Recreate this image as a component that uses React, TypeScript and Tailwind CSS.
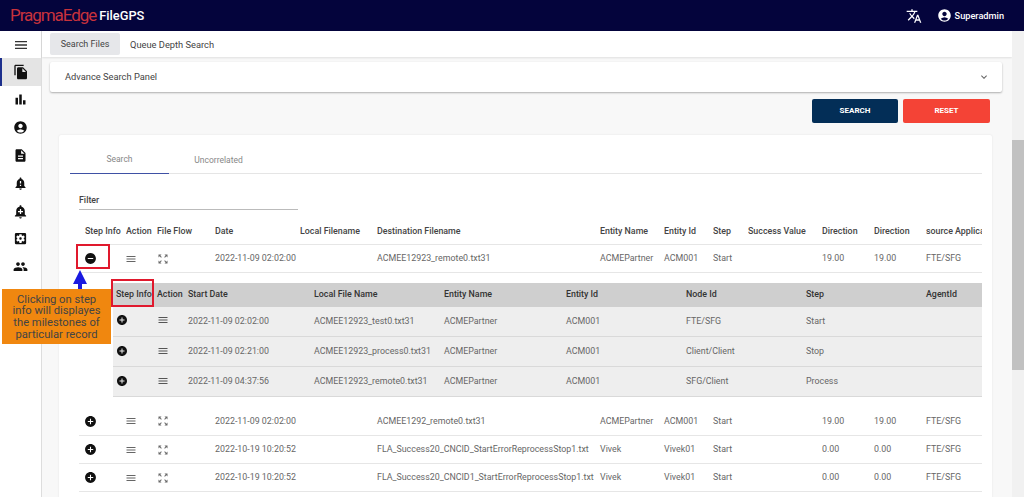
import { MdMenu, MdFileCopy, MdBarChart, MdAccountCircle, MdDescription, MdNotificationImportant, MdAddAlert, MdSettingsApplications, MdPeople, MdTranslate, MdAddCircle, MdRemoveCircle, MdZoomOutMap, MdExpandMore } from 'react-icons/md';

const mainCols = ['w-[47px]', 'w-[31px]', 'w-[58px]', 'w-[85px]', 'w-[77px]', 'w-[223px]', 'w-[64px]', 'w-[49px]', 'w-[35px]', 'w-[74px]', 'w-[52px]', 'w-[52px]', 'w-[56px]'];
const mainHead = ['Step Info', 'Action', 'File Flow', 'Date', 'Local Filename', 'Destination Filename', 'Entity Name', 'Entity Id', 'Step', 'Success Value', 'Direction', 'Direction', 'source Application'];

const subCols = ['w-[44px]', 'w-[31px]', 'w-[126px]', 'w-[130px]', 'w-[122px]', 'w-[120px]', 'w-[120px]', 'w-[120px]', 'w-[56px]'];
const subHead = ['Step Info', 'Action', 'Start Date', 'Local File Name', 'Entity Name', 'Entity Id', 'Node Id', 'Step', 'AgentId'];

const subRows = [
  ['2022-11-09 02:02:00', 'ACMEE12923_test0.txt31', 'ACMEPartner', 'ACM001', 'FTE/SFG', 'Start'],
  ['2022-11-09 02:21:00', 'ACMEE12923_process0.txt31', 'ACMEPartner', 'ACM001', 'Client/Client', 'Stop'],
  ['2022-11-09 04:37:56', 'ACMEE12923_remote0.txt31', 'ACMEPartner', 'ACM001', 'SFG/Client', 'Process'],
];

const moreRows = [
  ['2022-11-09 02:02:00', 'ACMEE1292_remote0.txt31', 'ACMEPartner', 'ACM001', 'Start', '19.00', '19.00'],
  ['2022-10-19 10:20:52', 'FLA_Success20_CNCID_StartErrorReprocessStop1.txt', 'Vivek', 'Vivek01', 'Start', '0.00', '0.00'],
  ['2022-10-19 10:20:52', 'FLA_Success20_CNCID1_StartErrorReprocessStop1.txt', 'Vivek', 'Vivek01', 'Start', '0.00', '0.00'],
];

function MainRow({ row, open }: { row: string[]; open?: boolean }) {
  return (
    <tr className="h-[28px] border-b border-[#e6e6e6] text-[#666] [&>td]:pt-px">
      <td className="pl-[5px]">
        {open ? <MdRemoveCircle size={13} className="text-[#111]" /> : <MdAddCircle size={13} className="text-[#111]" />}
      </td>
      <td><MdMenu size={12} className="ml-[-1px] text-[#666]" /></td>
      <td><MdZoomOutMap size={12} className="text-[#666]" /></td>
      <td className="whitespace-nowrap">{row[0]}</td>
      <td></td>
      <td className="whitespace-nowrap">{row[1]}</td>
      <td>{row[2]}</td>
      <td>{row[3]}</td>
      <td>{row[4]}</td>
      <td></td>
      <td>{row[5]}</td>
      <td>{row[6]}</td>
      <td>FTE/SFG</td>
    </tr>
  );
}

function Columns({ cols }: { cols: string[] }) {
  return (
    <colgroup>
      {cols.map((c, i) => <col key={i} className={c} />)}
    </colgroup>
  );
}

function SubTable() {
  return (
    <table className="table-fixed w-[869px] ml-[34px] border-collapse">
      <Columns cols={subCols} />
      <thead>
        <tr className="h-[24px] bg-[#cfcfcf] text-[#333] font-medium text-left">
          {subHead.map((h, i) => (
            <th key={i} className={`font-medium whitespace-nowrap ${i === 0 ? 'pl-[3px]' : ''}`}>{h}</th>
          ))}
        </tr>
      </thead>
      <tbody>
        {subRows.map((r, i) => (
          <tr key={i} className="h-[30px] bg-[#eeeeee] border-b border-[#d9d9d9] text-[#666]">
            <td className="pl-[3px] pb-[2px]"><MdAddCircle size={12} className="text-[#111]" /></td>
            <td className="pb-[2px]"><MdMenu size={12} className="text-[#555]" /></td>
            <td>{r[0]}</td>
            <td>{r[1]}</td>
            <td>{r[2]}</td>
            <td>{r[3]}</td>
            <td>{r[4]}</td>
            <td>{r[5]}</td>
            <td></td>
          </tr>
        ))}
      </tbody>
    </table>
  );
}

export default function App() {
  const navIcons = [MdBarChart, MdAccountCircle, MdDescription, MdNotificationImportant, MdAddAlert, MdSettingsApplications, MdPeople];
  return (
    <div className="relative h-[497px] w-[1024px] overflow-hidden bg-[#f8f8f8] [font-family:Roboto,sans-serif] text-[8.85px]">
      <header className="flex h-[31px] items-center justify-between bg-[#04043c] pl-[10px] pr-[20px]">
        <div className="flex items-center">
          <span className="text-[17px] tracking-[-1.05px] text-[#c8323c]">PragmaEdge</span>
          <span className="ml-[3px] text-[12.8px] font-medium text-white">FileGPS</span>
        </div>
        <div className="flex items-center text-white">
          <MdTranslate size={16} />
          <MdAccountCircle size={15} className="ml-[15px]" />
          <span className="ml-[3px] text-[9.2px] font-medium">Superadmin</span>
        </div>
      </header>

      <div className="flex h-[466px]">
        <aside className="flex w-[42px] shrink-0 flex-col border-r border-[#ddd] bg-white">
          <div className="flex h-[27px] items-center justify-center">
            <MdMenu size={16} className="text-[#333]" />
          </div>
          <div className="flex h-[28px] items-center justify-center border-l-2 border-[#1c2f8c] bg-[#e4e4e4] pr-[2px]">
            <MdFileCopy size={16} className="text-[#111]" />
          </div>
          {navIcons.map((Icon, i) => (
            <div key={i} className="flex h-[27.8px] items-center justify-center">
              <Icon size={15} className="text-[#111]" />
            </div>
          ))}
        </aside>

        <div className="flex min-w-0 flex-1 flex-col pr-[12px]">
          <nav className="flex h-[26px] items-center gap-[10px] bg-white pl-[8px] text-[9px] text-[#444] shadow-[0_1px_2px_rgba(0,0,0,0.1)]">
            <span className="flex h-[22px] w-[70px] items-center justify-center rounded-[2px] bg-[#e6e7ea] pt-px">Search Files</span>
            <span className="pt-px text-[9.3px]">Queue Depth Search</span>
          </nav>

          <main className="min-h-0 flex-1 overflow-hidden">
            <div className="ml-[8px] mr-[10px] mt-[5px] flex h-[30px] items-center justify-between rounded-[2px] bg-white pl-[15px] pr-[12px] text-[9.3px] text-[#444] shadow-[0_1px_2px_rgba(0,0,0,0.3)]">
              <span>Advance Search Panel</span>
              <MdExpandMore size={12} className="text-[#666]" />
            </div>

            <div className="mt-[7px] flex justify-end gap-[5px] pr-[22px]">
              <button className="h-[24px] w-[86px] rounded-[2px] bg-[#032e57] text-[8px] font-bold text-white">SEARCH</button>
              <button className="h-[24px] w-[87px] rounded-[2px] bg-[#f44336] text-[8px] font-bold text-white">RESET</button>
            </div>

            <section className="ml-[17px] mr-[20px] mt-[12px] h-[400px] rounded-[2px] bg-white pl-[11px] pr-[10px] pt-[12px] shadow-[0_0_2px_rgba(0,0,0,0.1)]">
              <div className="flex h-[27px] border-b border-[#e5e5e5] text-[#888]">
                <span className="flex h-[27px] w-[99px] items-center justify-center border-b border-[#3f51a5] pb-px text-[8.5px]">Search</span>
                <span className="flex h-[27px] w-[99px] items-center justify-center pb-px text-[8.5px]">Uncorrelated</span>
              </div>

              <div className="ml-[9px] mt-[20px] h-[16px] w-[219px] border-b border-[#bbb] font-medium text-[#444]">Filter</div>

              <table className="ml-[9px] mt-[10px] w-[903px] table-fixed border-collapse">
                <Columns cols={mainCols} />
                <thead>
                  <tr className="h-[24px] border-b border-[#e6e6e6] text-left text-[#444]">
                    {mainHead.map((h, i) => (
                      <th key={i} className={`overflow-hidden whitespace-nowrap font-medium ${i === 0 ? 'pl-[6px]' : ''}`}>{h}</th>
                    ))}
                  </tr>
                </thead>
                <tbody>
                  <MainRow open row={['2022-11-09 02:02:00', 'ACMEE12923_remote0.txt31', 'ACMEPartner', 'ACM001', 'Start', '19.00', '19.00']} />
                  <tr>
                    <td colSpan={13} className="h-[134px] align-top pt-[10px] pb-[10px]">
                      <SubTable />
                    </td>
                  </tr>
                  {moreRows.map((r, i) => <MainRow key={i} row={r} />)}
                </tbody>
              </table>
            </section>
          </main>
        </div>
      </div>

      {/* scrollbar */}
      <div className="absolute right-0 top-[31px] h-[466px] w-[12px] bg-[#f1f1f1]">
        <div className="mt-[109px] h-[230px] bg-[#c1c1c1]" />
      </div>

      {/* annotations */}
      <div className="absolute left-[76px] top-[244px] h-[25px] w-[34px] border-[2px] border-[#e0192d]" />
      <div className="absolute left-[111px] top-[279px] h-[28px] w-[43px] border-[2px] border-[#e0192d]" />
      <svg className="absolute left-[73px] top-[270px]" width="14" height="20" viewBox="0 0 14 20">
        <path d="M7 0 L14 14 H9 V20 H5 V14 H0 Z" fill="#1a1ae0" />
      </svg>
      <div className="absolute left-[2px] top-[289px] flex h-[55px] w-[109px] items-center justify-center bg-[#f0870f] pt-px text-center [font-family:'Liberation_Sans',sans-serif] text-[11.2px] leading-[11.7px] text-[#444]">
        Clicking on step<br />info will displayes<br />the milestones of<br />particular record
      </div>
    </div>
  );
}
